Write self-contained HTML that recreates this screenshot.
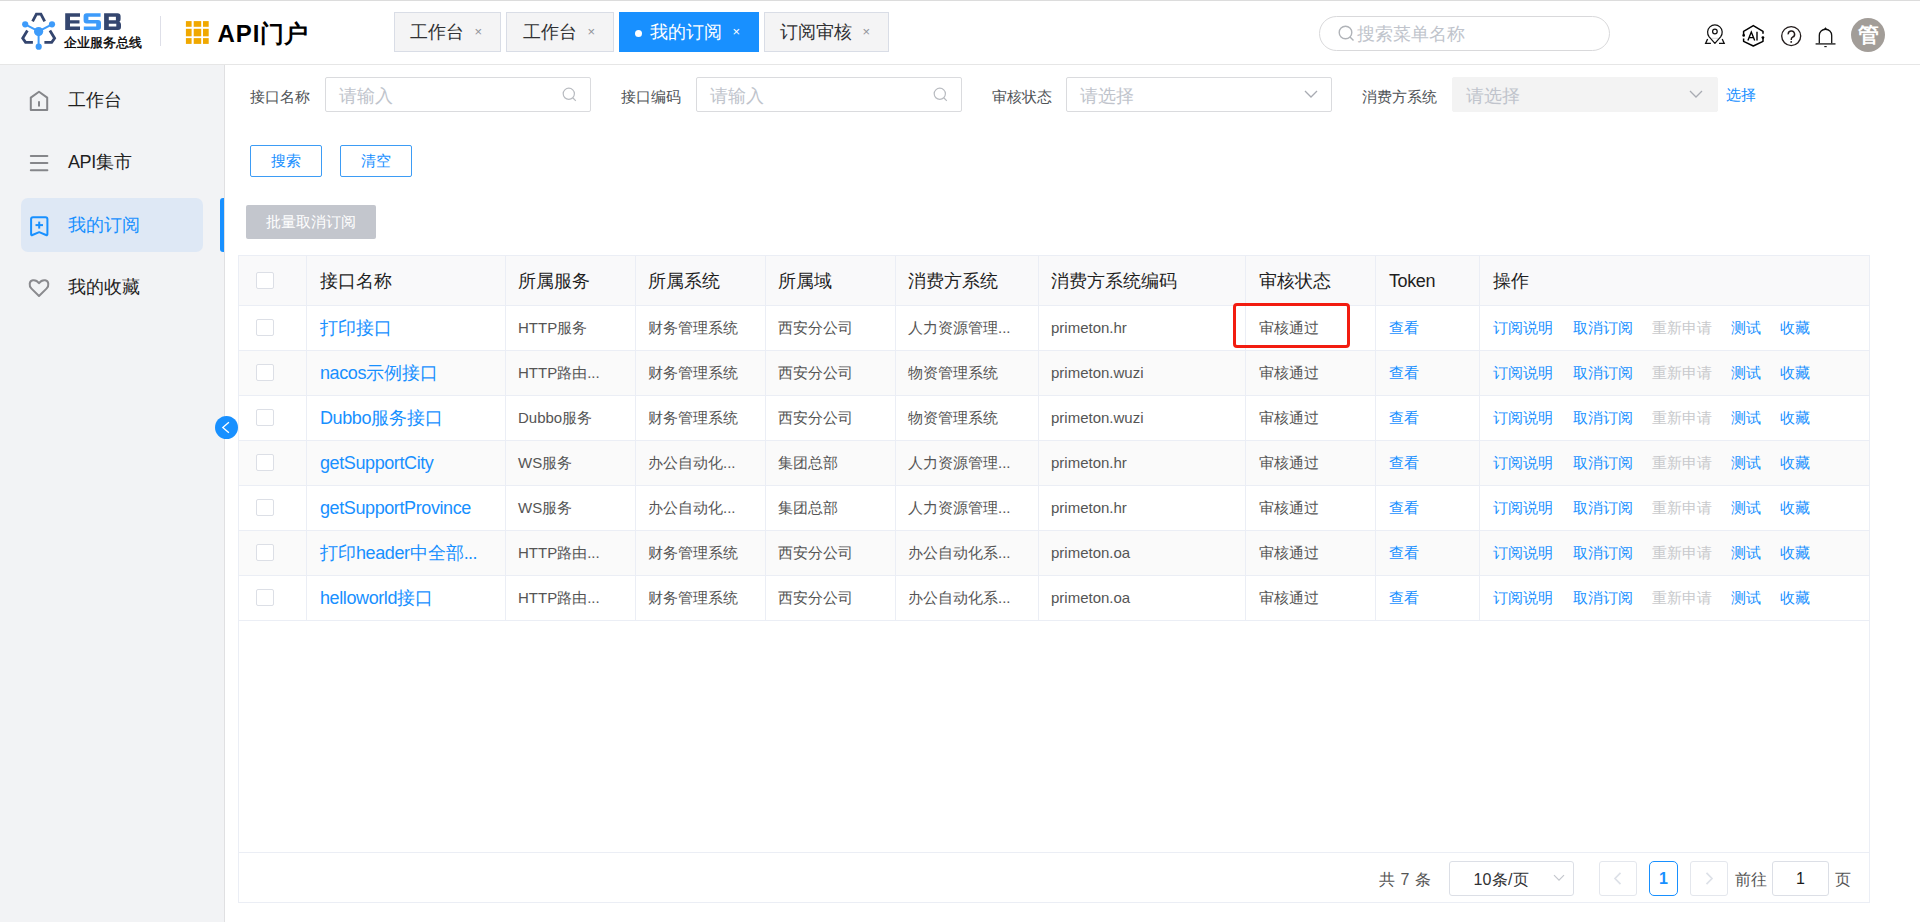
<!DOCTYPE html>
<html><head><meta charset="utf-8">
<style>
*{box-sizing:border-box;margin:0;padding:0}
html,body{width:1920px;height:922px;overflow:hidden;background:#fff;font-family:"Liberation Sans",sans-serif;color:#303133}
.abs{position:absolute;white-space:nowrap}
#topline{left:0;top:0;width:1920px;height:1px;background:#dcdcdc}
#header{left:0;top:0;width:1920px;height:65px;border-bottom:1px solid #e6e6e6;background:#fff}
.tab{position:absolute;top:12px;height:40px;border:1px solid #d9dde6;background:#f4f4f5;font-size:18px;color:#303133;line-height:38px;padding-left:15px;white-space:nowrap}
.tab .x{position:absolute;font-size:13px;color:#909399}
.tab.active{background:#1890ff;border-color:#1890ff;color:#fff}
.tab.active .x{color:#fff}
#sidebar{left:0;top:65px;width:225px;height:857px;background:#f2f3f5;border-right:1px solid #e0e0e2}
.lbl{position:absolute;font-size:15px;color:#505357}
.inp{position:absolute;height:35px;border:1px solid #dadbde;border-radius:2px;background:#fff}
.ph{position:absolute;font-size:17.5px;line-height:20px;color:#c0c4cc;top:50%;margin-top:-9px}
.btn{position:absolute;height:32px;border:1px solid #3d9cf5;border-radius:2px;color:#1890ff;font-size:15px;text-align:center;line-height:30px;background:#fff}
.cb{width:18px;height:17px;border:1px solid #dcdfe6;border-radius:2px;background:#fff}
.hd{font-size:18px;line-height:22px;color:#1f1f1f}
.nm{font-size:18px;line-height:22px;color:#1890ff}
.tx{font-size:15px;line-height:20px;color:#555}
.lk{font-size:15px;line-height:20px;color:#1890ff}
.dis{font-size:15px;line-height:20px;color:#c8c9cc}

</style></head><body>
<div id="header" class="abs">
<div id="topline" class="abs"></div>

<svg class="abs" style="left:0;top:0" width="60" height="56" viewBox="0 0 60 56">
 <g fill="none" stroke="#34466f" stroke-width="2.8" stroke-linejoin="miter" stroke-linecap="butt">
  <polyline points="32.6,21.3 36.4,14.2 40.9,14.2 44.7,21.3"/>
  <polyline points="27.4,30.6 22.7,38.2 25.6,42.4 32.9,42.4"/>
  <polyline points="49.9,30.6 54.6,38.2 51.7,42.4 44.4,42.4"/>
 </g>
 <g fill="#3d9bfa" stroke="#3d9bfa">
  <line x1="25.2" y1="24.3" x2="38.6" y2="31.4" stroke-width="2"/>
  <line x1="52" y1="24.3" x2="38.6" y2="31.4" stroke-width="2"/>
  <line x1="38.6" y1="31.4" x2="38.6" y2="46.7" stroke-width="2"/>
  <circle cx="25.2" cy="24.3" r="3.1" stroke="none"/>
  <circle cx="52" cy="24.3" r="3.1" stroke="none"/>
  <circle cx="38.6" cy="31.6" r="4.6" stroke="none"/>
  <circle cx="38.7" cy="46.7" r="3.1" stroke="none"/>
 </g>
</svg>
<svg class="abs" style="left:60px;top:10px" width="66" height="24" viewBox="60 10 66 24">
<path fill="#34466f" d="M65.2 13.2 H80 V16.8 H70 V20.2 H79.5 V23.6 H70 V26.4 H80 V30 H65.2 Z"/>
<path fill="#3d9bfa" d="M86.6 13.2 H100.6 V16.8 H88.4 V20.1 H98 Q101 20.1 101 23.1 V27 Q101 30 98 30 H83.8 V26.4 H96.2 V23.5 H86.6 Q83.6 23.5 83.6 20.5 V16.2 Q83.6 13.2 86.6 13.2 Z"/>
<path fill="#34466f" fill-rule="evenodd" d="M104.1 13.2 H117.5 Q120.6 13.2 120.6 16.2 V19.2 Q120.6 21 119.4 21.7 Q121 22.5 121 24.4 V27 Q121 30 118 30 H104.1 Z M108.8 16.8 V20.2 H115.9 V16.8 Z M108.8 23.7 V26.5 H116.3 V23.7 Z"/>
</svg>
<div class="abs" style="left:63.5px;top:35px;font-size:13.3px;line-height:16px;color:#000;-webkit-text-stroke:0.35px #000">企业服务总线</div>
<div class="abs" style="left:160px;top:16px;width:1px;height:30px;background:#dedfe8"></div>
<svg class="abs" style="left:180px;top:16px" width="34" height="34" viewBox="180 16 34 34"><rect x="185.9" y="21.1" width="5.7" height="5.7" fill="#f0a800"/><rect x="193.7" y="21.1" width="7.5" height="5.7" fill="#f0a800"/><rect x="203" y="21.1" width="5.7" height="5.7" fill="#f0a800"/><rect x="185.9" y="28.8" width="5.7" height="7.5" fill="#f0a800"/><rect x="193.7" y="28.8" width="7.5" height="7.5" fill="#f0a800"/><rect x="203" y="28.8" width="5.7" height="7.5" fill="#f0a800"/><rect x="185.9" y="38.1" width="5.7" height="5.8" fill="#f0a800"/><rect x="193.7" y="38.1" width="7.5" height="5.8" fill="#f0a800"/><rect x="203" y="38.1" width="5.7" height="5.8" fill="#f0a800"/></svg>
<div class="abs" style="left:217.5px;top:19px;font-size:24px;font-weight:bold;line-height:30px;color:#000"><span style="letter-spacing:0.9px">API</span>门户</div>
<div class="tab" style="left:394px;width:107px;padding-left:15px">工作台<span class="x" style="right:18px;top:0">×</span></div>
<div class="tab" style="left:506px;width:108px;padding-left:16px">工作台<span class="x" style="right:18px;top:0">×</span></div>
<div class="tab active" style="left:619px;width:140px;padding-left:15px"><span style="display:inline-block;width:7px;height:7px;border-radius:50%;background:#fff;margin-right:8px;vertical-align:middle;position:relative;top:0px"></span>我的订阅<span class="x" style="right:18px;top:0">×</span></div>
<div class="tab" style="left:764px;width:125px;padding-left:15px">订阅审核<span class="x" style="right:18px;top:0">×</span></div>
<div class="abs" style="left:1319px;top:16px;width:291px;height:35px;border:1px solid #d9d9db;border-radius:18px;background:#fff"></div>
<svg class="abs" style="left:1338px;top:25px" width="17" height="17" viewBox="0 0 17 17"><circle cx="7.5" cy="7.5" r="6.3" fill="none" stroke="#b0b3b8" stroke-width="1.4"/><line x1="12" y1="12" x2="15.5" y2="15.5" stroke="#b0b3b8" stroke-width="1.4"/></svg>
<div class="abs" style="left:1357px;top:22.5px;font-size:17.5px;line-height:22px;color:#c0c4cc">搜索菜单名称</div>
<svg class="abs" style="left:1700px;top:20px" width="145" height="30" viewBox="1700 20 145 30">
<g fill="none" stroke="#111" stroke-width="1.25">
<path d="M1714.9 43.4 L1709.2 36.8 A7.3 7.3 0 1 1 1720.6 36.8 Z" stroke-linejoin="round"/>
<circle cx="1714.9" cy="31.5" r="2.3"/>
<path d="M1707.6 38.9 L1705.6 43.4 H1710.9 M1722.2 38.9 L1724.2 43.4 H1719" stroke-width="1.3"/>
<line x1="1712" y1="38.3" x2="1718" y2="38.3" stroke="#ccc" stroke-width="0.8"/>
</g>
<g fill="none" stroke="#000" stroke-width="1.5" stroke-linejoin="round">
<path d="M1743.6 35.3 V31.3 L1753.3 25.6 L1763 31.3 V33.8"/>
<path d="M1743.6 38.6 V41.3 L1753.3 46 L1763 41.3 V37.5"/>
<circle cx="1743.7" cy="35.4" r="1.3" fill="#000" stroke="none"/>
<circle cx="1762.9" cy="37.6" r="1.4" fill="#000" stroke="none"/>
<path d="M1747.9 40.4 L1751.3 32 L1754.7 40.4 M1749.2 37.6 H1753.4" stroke-width="1.4" stroke-linejoin="miter"/>
<line x1="1757" y1="31.8" x2="1757" y2="40.4" stroke-width="1.4"/>
</g>
<g fill="none" stroke="#221b1b" stroke-width="1.35">
<circle cx="1791.2" cy="36.1" r="9.5"/>
<path d="M1788.2 34.4 A3.2 3.2 0 1 1 1792.6 37.2 Q1791.2 38 1791.2 39.9" stroke-width="1.45"/>
<circle cx="1791.2" cy="41.9" r="0.95" fill="#221b1b" stroke="none"/>
</g>
<g fill="none" stroke="#111" stroke-width="1.3">
<path d="M1819.3 43.6 V35.4 A6.2 6.2 0 0 1 1831.7 35.4 V43.6"/>
<line x1="1815.6" y1="43.9" x2="1835.5" y2="43.9" stroke="#333" stroke-width="1.5"/>
<path d="M1824.6 28.9 L1825.5 27.6 L1826.4 28.9 Z" fill="#111" stroke-width="0.6"/>
<line x1="1824.3" y1="46.6" x2="1826.7" y2="46.6" stroke-width="1.1"/>
</g>
</svg>
<div class="abs" style="left:1851px;top:18px;width:34px;height:34px;border-radius:50%;background:#a29d98;color:#fff;font-size:21px;line-height:34px;text-align:center;font-weight:bold">管</div>
</div>
<div id="sidebar" class="abs">
<div class="abs" style="left:21px;top:133px;width:182px;height:54px;border-radius:7px;background:#dee8f5"></div>
<div class="abs" style="left:220px;top:133px;width:4px;height:54px;border-radius:3px 0 0 3px;background:#1890ff"></div>
<svg class="abs" style="left:0;top:0" width="70" height="320" viewBox="0 65 70 320">
<g fill="none" stroke="#85868a" stroke-width="2" stroke-linejoin="round" stroke-linecap="round">
<path d="M30.8 97.6 L39 91.8 L47.2 97.6 V109.9 H30.8 Z"/>
<line x1="39" y1="102" x2="39" y2="105.8"/>
<line x1="30.8" y1="155.9" x2="47.4" y2="155.9"/>
<line x1="30.8" y1="163" x2="47.4" y2="163"/>
<line x1="30.8" y1="170.2" x2="47.4" y2="170.2"/>
<path d="M39 296 L31.5 288.6 C28.5 285.6 29.3 281 32.8 280.3 C35.6 279.8 37.6 281.3 39 283.2 C40.4 281.3 42.4 279.8 45.2 280.3 C48.7 281 49.5 285.6 46.5 288.6 Z" stroke="#8a8a8e"/>
</g>
<g fill="none" stroke="#1890ff" stroke-width="2" stroke-linejoin="round" stroke-linecap="round">
<path d="M33 217.2 H45.5 Q47.4 217.2 47.4 219.1 V234.3 Q47.4 235.6 46 235 L39.2 232.2 L32.4 235 Q31.1 235.6 31.1 234.3 V219.1 Q31.1 217.2 33 217.2 Z"/>
<line x1="39.2" y1="221.6" x2="39.2" y2="228.6" stroke-linecap="butt"/>
<line x1="35.5" y1="225.1" x2="43" y2="225.1" stroke-linecap="butt"/>
</g>
</svg>
<div class="abs" style="left:68px;top:24px;font-size:18px;line-height:22px;color:#1f1f1f">工作台</div>
<div class="abs" style="left:68px;top:86px;font-size:18px;line-height:22px;color:#1f1f1f"><span style="letter-spacing:-0.4px">API</span>集市</div>
<div class="abs" style="left:68px;top:149px;font-size:18px;line-height:22px;color:#1890ff">我的订阅</div>
<div class="abs" style="left:68px;top:211px;font-size:18px;line-height:22px;color:#1f1f1f">我的收藏</div>
</div>
<div class="abs" style="left:215px;top:416px;width:23px;height:23px;border-radius:50%;background:#1890ff;z-index:5"><svg width="23" height="23" viewBox="0 0 23 23"><path d="M13.9 6.2 L7.8 11.5 L13.9 16.8" fill="none" stroke="#fff" stroke-width="1.35"/></svg></div>
<div class="lbl" style="left:250px;top:87px;line-height:20px">接口名称</div>
<div class="inp" style="left:325px;top:77px;width:266px"><div class="ph" style="left:13px">请输入</div></div>
<svg class="abs" style="left:562px;top:87px" width="15" height="15" viewBox="0 0 15 15"><circle cx="6.8" cy="6.8" r="5.6" fill="none" stroke="#b8bbc0" stroke-width="1.2"/><line x1="11" y1="11" x2="13.8" y2="13.8" stroke="#b8bbc0" stroke-width="1.2"/></svg>
<div class="lbl" style="left:621px;top:87px;line-height:20px">接口编码</div>
<div class="inp" style="left:696px;top:77px;width:266px"><div class="ph" style="left:13px">请输入</div></div>
<svg class="abs" style="left:933px;top:87px" width="15" height="15" viewBox="0 0 15 15"><circle cx="6.8" cy="6.8" r="5.6" fill="none" stroke="#b8bbc0" stroke-width="1.2"/><line x1="11" y1="11" x2="13.8" y2="13.8" stroke="#b8bbc0" stroke-width="1.2"/></svg>
<div class="lbl" style="left:992px;top:87px;line-height:20px">审核状态</div>
<div class="inp" style="left:1066px;top:77px;width:266px"><div class="ph" style="left:13px">请选择</div></div>
<svg class="abs" style="left:1304px;top:90px" width="14" height="9" viewBox="0 0 14 9"><path d="M1 1 L7 7 L13 1" fill="none" stroke="#a8abb2" stroke-width="1.3"/></svg>
<div class="lbl" style="left:1362px;top:87px;line-height:20px">消费方系统</div>
<div class="inp" style="left:1452px;top:77px;width:266px;background:#f3f3f3;border-color:#f3f3f3"><div class="ph" style="left:13px">请选择</div></div>
<svg class="abs" style="left:1689px;top:90px" width="14" height="9" viewBox="0 0 14 9"><path d="M1 1 L7 7 L13 1" fill="none" stroke="#a8abb2" stroke-width="1.3"/></svg>
<div class="abs" style="left:1726px;top:85px;font-size:15px;line-height:20px;color:#1890ff">选择</div>
<div class="btn" style="left:250px;top:145px;width:72px">搜索</div>
<div class="btn" style="left:340px;top:145px;width:72px">清空</div>
<div class="abs" style="left:246px;top:205px;width:130px;height:34px;background:#c3c6cd;border-radius:2px;color:#fff;font-size:15px;line-height:34px;text-align:center">批量取消订阅</div>
<div class="abs" style="left:238px;top:255px;width:1632px;height:648px;border:1px solid #ebeef5;background:#fff">
<div class="abs" style="left:0;top:0;width:1630px;height:50px;background:#f9f9fa;border-bottom:1px solid #ebeef5"></div>
<div class="abs" style="left:0;top:50px;width:1630px;height:45px;background:#fff;border-bottom:1px solid #ebeef5"></div>
<div class="abs" style="left:0;top:95px;width:1630px;height:45px;background:#fafafa;border-bottom:1px solid #ebeef5"></div>
<div class="abs" style="left:0;top:140px;width:1630px;height:45px;background:#fff;border-bottom:1px solid #ebeef5"></div>
<div class="abs" style="left:0;top:185px;width:1630px;height:45px;background:#fafafa;border-bottom:1px solid #ebeef5"></div>
<div class="abs" style="left:0;top:230px;width:1630px;height:45px;background:#fff;border-bottom:1px solid #ebeef5"></div>
<div class="abs" style="left:0;top:275px;width:1630px;height:45px;background:#fafafa;border-bottom:1px solid #ebeef5"></div>
<div class="abs" style="left:0;top:320px;width:1630px;height:45px;background:#fff;border-bottom:1px solid #ebeef5"></div>
<div class="abs" style="left:67px;top:0;width:1px;height:365px;background:#ebeef5"></div>
<div class="abs" style="left:266px;top:0;width:1px;height:365px;background:#ebeef5"></div>
<div class="abs" style="left:396px;top:0;width:1px;height:365px;background:#ebeef5"></div>
<div class="abs" style="left:526px;top:0;width:1px;height:365px;background:#ebeef5"></div>
<div class="abs" style="left:656px;top:0;width:1px;height:365px;background:#ebeef5"></div>
<div class="abs" style="left:799px;top:0;width:1px;height:365px;background:#ebeef5"></div>
<div class="abs" style="left:1006px;top:0;width:1px;height:365px;background:#ebeef5"></div>
<div class="abs" style="left:1136px;top:0;width:1px;height:365px;background:#ebeef5"></div>
<div class="abs" style="left:1240px;top:0;width:1px;height:365px;background:#ebeef5"></div>
<div class="abs" style="left:0;top:596px;width:1630px;height:1px;background:#ebeef5"></div>
</div>
<div class="cb abs" style="left:256px;top:272px"></div>
<div class="abs hd" style="left:320px;top:269.5px">接口名称</div>
<div class="abs hd" style="left:518px;top:269.5px">所属服务</div>
<div class="abs hd" style="left:648px;top:269.5px">所属系统</div>
<div class="abs hd" style="left:778px;top:269.5px">所属域</div>
<div class="abs hd" style="left:908px;top:269.5px">消费方系统</div>
<div class="abs hd" style="left:1051px;top:269.5px">消费方系统编码</div>
<div class="abs hd" style="left:1259px;top:269.5px">审核状态</div>
<div class="abs hd" style="left:1389px;top:269.5px"><span style="letter-spacing:-0.4px">Token</span></div>
<div class="abs hd" style="left:1493px;top:269.5px">操作</div>
<div class="cb abs" style="left:256px;top:319px"></div>
<div class="abs nm" style="left:320px;top:316.5px">打印接口</div>
<div class="abs tx" style="left:518px;top:318px">HTTP服务</div>
<div class="abs tx" style="left:648px;top:318px">财务管理系统</div>
<div class="abs tx" style="left:778px;top:318px">西安分公司</div>
<div class="abs tx" style="left:908px;top:318px">人力资源管理...</div>
<div class="abs tx" style="left:1051px;top:318px">primeton.hr</div>
<div class="abs tx" style="left:1259px;top:318px">审核通过</div>
<div class="abs lk" style="left:1389px;top:318px">查看</div>
<div class="abs lk" style="left:1493px;top:318px">订阅说明</div>
<div class="abs lk" style="left:1573px;top:318px">取消订阅</div>
<div class="abs dis" style="left:1652px;top:318px">重新申请</div>
<div class="abs lk" style="left:1731px;top:318px">测试</div>
<div class="abs lk" style="left:1780px;top:318px">收藏</div>
<div class="cb abs" style="left:256px;top:364px"></div>
<div class="abs nm" style="left:320px;top:361.5px"><span style="letter-spacing:-0.4px">nacos</span>示例接口</div>
<div class="abs tx" style="left:518px;top:363px">HTTP路由...</div>
<div class="abs tx" style="left:648px;top:363px">财务管理系统</div>
<div class="abs tx" style="left:778px;top:363px">西安分公司</div>
<div class="abs tx" style="left:908px;top:363px">物资管理系统</div>
<div class="abs tx" style="left:1051px;top:363px">primeton.wuzi</div>
<div class="abs tx" style="left:1259px;top:363px">审核通过</div>
<div class="abs lk" style="left:1389px;top:363px">查看</div>
<div class="abs lk" style="left:1493px;top:363px">订阅说明</div>
<div class="abs lk" style="left:1573px;top:363px">取消订阅</div>
<div class="abs dis" style="left:1652px;top:363px">重新申请</div>
<div class="abs lk" style="left:1731px;top:363px">测试</div>
<div class="abs lk" style="left:1780px;top:363px">收藏</div>
<div class="cb abs" style="left:256px;top:409px"></div>
<div class="abs nm" style="left:320px;top:406.5px"><span style="letter-spacing:-0.4px">Dubbo</span>服务接口</div>
<div class="abs tx" style="left:518px;top:408px">Dubbo服务</div>
<div class="abs tx" style="left:648px;top:408px">财务管理系统</div>
<div class="abs tx" style="left:778px;top:408px">西安分公司</div>
<div class="abs tx" style="left:908px;top:408px">物资管理系统</div>
<div class="abs tx" style="left:1051px;top:408px">primeton.wuzi</div>
<div class="abs tx" style="left:1259px;top:408px">审核通过</div>
<div class="abs lk" style="left:1389px;top:408px">查看</div>
<div class="abs lk" style="left:1493px;top:408px">订阅说明</div>
<div class="abs lk" style="left:1573px;top:408px">取消订阅</div>
<div class="abs dis" style="left:1652px;top:408px">重新申请</div>
<div class="abs lk" style="left:1731px;top:408px">测试</div>
<div class="abs lk" style="left:1780px;top:408px">收藏</div>
<div class="cb abs" style="left:256px;top:454px"></div>
<div class="abs nm" style="left:320px;top:451.5px"><span style="letter-spacing:-0.4px">getSupportCity</span></div>
<div class="abs tx" style="left:518px;top:453px">WS服务</div>
<div class="abs tx" style="left:648px;top:453px">办公自动化...</div>
<div class="abs tx" style="left:778px;top:453px">集团总部</div>
<div class="abs tx" style="left:908px;top:453px">人力资源管理...</div>
<div class="abs tx" style="left:1051px;top:453px">primeton.hr</div>
<div class="abs tx" style="left:1259px;top:453px">审核通过</div>
<div class="abs lk" style="left:1389px;top:453px">查看</div>
<div class="abs lk" style="left:1493px;top:453px">订阅说明</div>
<div class="abs lk" style="left:1573px;top:453px">取消订阅</div>
<div class="abs dis" style="left:1652px;top:453px">重新申请</div>
<div class="abs lk" style="left:1731px;top:453px">测试</div>
<div class="abs lk" style="left:1780px;top:453px">收藏</div>
<div class="cb abs" style="left:256px;top:499px"></div>
<div class="abs nm" style="left:320px;top:496.5px"><span style="letter-spacing:-0.4px">getSupportProvince</span></div>
<div class="abs tx" style="left:518px;top:498px">WS服务</div>
<div class="abs tx" style="left:648px;top:498px">办公自动化...</div>
<div class="abs tx" style="left:778px;top:498px">集团总部</div>
<div class="abs tx" style="left:908px;top:498px">人力资源管理...</div>
<div class="abs tx" style="left:1051px;top:498px">primeton.hr</div>
<div class="abs tx" style="left:1259px;top:498px">审核通过</div>
<div class="abs lk" style="left:1389px;top:498px">查看</div>
<div class="abs lk" style="left:1493px;top:498px">订阅说明</div>
<div class="abs lk" style="left:1573px;top:498px">取消订阅</div>
<div class="abs dis" style="left:1652px;top:498px">重新申请</div>
<div class="abs lk" style="left:1731px;top:498px">测试</div>
<div class="abs lk" style="left:1780px;top:498px">收藏</div>
<div class="cb abs" style="left:256px;top:544px"></div>
<div class="abs nm" style="left:320px;top:541.5px">打印<span style="letter-spacing:-0.4px">header</span>中全部<span style="letter-spacing:-0.6px">...</span></div>
<div class="abs tx" style="left:518px;top:543px">HTTP路由...</div>
<div class="abs tx" style="left:648px;top:543px">财务管理系统</div>
<div class="abs tx" style="left:778px;top:543px">西安分公司</div>
<div class="abs tx" style="left:908px;top:543px">办公自动化系...</div>
<div class="abs tx" style="left:1051px;top:543px">primeton.oa</div>
<div class="abs tx" style="left:1259px;top:543px">审核通过</div>
<div class="abs lk" style="left:1389px;top:543px">查看</div>
<div class="abs lk" style="left:1493px;top:543px">订阅说明</div>
<div class="abs lk" style="left:1573px;top:543px">取消订阅</div>
<div class="abs dis" style="left:1652px;top:543px">重新申请</div>
<div class="abs lk" style="left:1731px;top:543px">测试</div>
<div class="abs lk" style="left:1780px;top:543px">收藏</div>
<div class="cb abs" style="left:256px;top:589px"></div>
<div class="abs nm" style="left:320px;top:586.5px"><span style="letter-spacing:-0.4px">helloworld</span>接口</div>
<div class="abs tx" style="left:518px;top:588px">HTTP路由...</div>
<div class="abs tx" style="left:648px;top:588px">财务管理系统</div>
<div class="abs tx" style="left:778px;top:588px">西安分公司</div>
<div class="abs tx" style="left:908px;top:588px">办公自动化系...</div>
<div class="abs tx" style="left:1051px;top:588px">primeton.oa</div>
<div class="abs tx" style="left:1259px;top:588px">审核通过</div>
<div class="abs lk" style="left:1389px;top:588px">查看</div>
<div class="abs lk" style="left:1493px;top:588px">订阅说明</div>
<div class="abs lk" style="left:1573px;top:588px">取消订阅</div>
<div class="abs dis" style="left:1652px;top:588px">重新申请</div>
<div class="abs lk" style="left:1731px;top:588px">测试</div>
<div class="abs lk" style="left:1780px;top:588px">收藏</div>
<div class="abs" style="left:1233px;top:303px;width:117px;height:45px;border:3.5px solid #f21c10;border-radius:4px"></div>
<div class="abs" style="left:1379px;top:869.5px;font-size:16px;line-height:20px;color:#555;word-spacing:1px">共 7 条</div>
<div class="abs" style="left:1449px;top:861px;width:125px;height:35px;border:1px solid #dcdfe6;border-radius:3px;background:#fff"></div>
<div class="abs" style="left:1473.5px;top:869.5px;font-size:16px;line-height:20px;color:#303133;letter-spacing:0.2px">10条/页</div>
<svg class="abs" style="left:1553px;top:874px" width="12" height="8" viewBox="0 0 12 8"><path d="M1 1.2 L6 6.2 L11 1.2" fill="none" stroke="#c4c7cd" stroke-width="1.2"/></svg>
<div class="abs" style="left:1599px;top:861px;width:38px;height:35px;border:1px solid #e4e7ed;border-radius:3px;background:#fff"></div>
<svg class="abs" style="left:1612px;top:871px" width="11" height="15" viewBox="0 0 11 15"><path d="M8.5 1.8 L3 7.5 L8.5 13.2" fill="none" stroke="#dde1e8" stroke-width="1.7"/></svg>
<div class="abs" style="left:1649px;top:861px;width:29px;height:35px;border:1px solid #1890ff;border-radius:5px;background:#fff;color:#1890ff;font-size:16px;font-weight:bold;line-height:33px;text-align:center">1</div>
<div class="abs" style="left:1690px;top:861px;width:38px;height:35px;border:1px solid #e4e7ed;border-radius:3px;background:#fff"></div>
<svg class="abs" style="left:1704px;top:871px" width="11" height="15" viewBox="0 0 11 15"><path d="M2.5 1.8 L8 7.5 L2.5 13.2" fill="none" stroke="#dde1e8" stroke-width="1.7"/></svg>
<div class="abs" style="left:1734.5px;top:869.5px;font-size:16px;line-height:20px;color:#555">前往</div>
<div class="abs" style="left:1772px;top:861px;width:57px;height:35px;border:1px solid #dcdfe6;border-radius:3px;background:#fff;font-size:16px;line-height:34px;text-align:center;color:#1a1a1a">1</div>
<div class="abs" style="left:1834.5px;top:869.5px;font-size:16px;line-height:20px;color:#555">页</div>
</body></html>
